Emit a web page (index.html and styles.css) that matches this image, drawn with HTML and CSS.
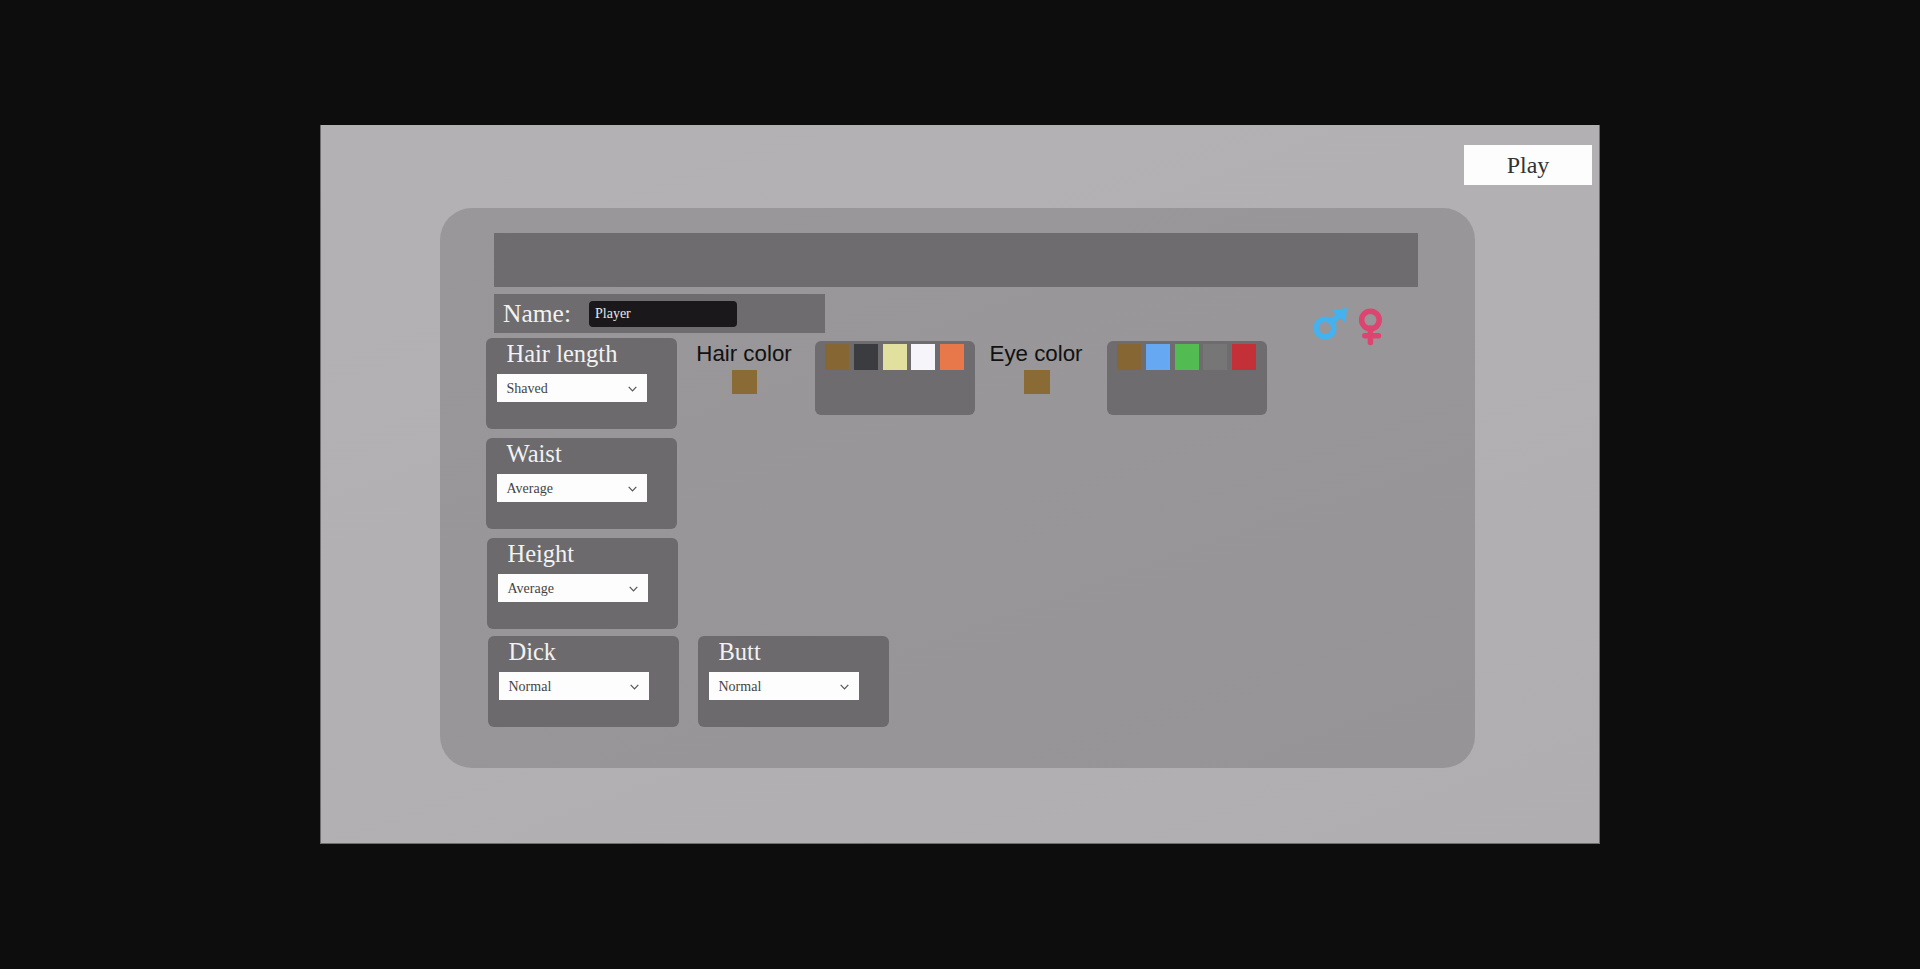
FILE: index.html
```html
<!DOCTYPE html>
<html lang="en">
<head>
<meta charset="utf-8">
<title>Character creation</title>
<link rel="stylesheet" href="styles.css">
</head>
<body>
<main class="stage">
  <button class="play" type="button">Play</button>
  <section class="panel">
    <div class="top-bar"></div>
    <div class="name-row">
      <div class="name-bar">
        <span class="name-label">Name:</span>
        <div class="name-input">Player</div>
      </div>
      <div class="genders">
        <svg class="male" width="34" height="32" viewBox="0 0 34 32" aria-label="Male">
          <circle cx="12" cy="20" r="8.800" fill="none" stroke="#43b2ef" stroke-width="5.500"/>
          <path d="M18 14 28 6" fill="none" stroke="#43b2ef" stroke-width="6"/>
          <path d="M34 0 19 2.500 32.500 15Z" fill="#43b2ef"/>
        </svg>
        <svg class="female" width="23" height="38" viewBox="0 0 23 38" aria-label="Female">
          <circle cx="11.400" cy="12" r="8.800" fill="none" stroke="#de4470" stroke-width="5.500"/>
          <path d="M11.400 20V34.500M5.800 27.700H19.500" fill="none" stroke="#de4470" stroke-width="5.500" stroke-linecap="round"/>
        </svg>
      </div>
    </div>

    <div class="row row-first">
      <div class="card">
        <div class="card-title">Hair length</div>
        <div class="select"><span>Shaved</span><svg width="9" height="6" viewBox="0 0 9 6"><path d="M.7.8 4.500 4.800 8.300.8" fill="none" stroke="#555" stroke-width="1.200"/></svg></div>
      </div>
      <div class="color-block hair-block">
        <div class="color-label">Hair color</div>
        <div class="color-current"></div>
      </div>
      <div class="palette hair-palette">
        <div class="swatch c-brown"></div>
        <div class="swatch c-dark"></div>
        <div class="swatch c-cream"></div>
        <div class="swatch c-white"></div>
        <div class="swatch c-orange"></div>
      </div>
      <div class="color-block eye-block">
        <div class="color-label">Eye color</div>
        <div class="color-current"></div>
      </div>
      <div class="palette eye-palette">
        <div class="swatch c-brown"></div>
        <div class="swatch c-blue"></div>
        <div class="swatch c-green"></div>
        <div class="swatch c-grey"></div>
        <div class="swatch c-red"></div>
      </div>
    </div>

    <div class="row row-waist">
      <div class="card">
        <div class="card-title">Waist</div>
        <div class="select"><span>Average</span><svg width="9" height="6" viewBox="0 0 9 6"><path d="M.7.8 4.500 4.800 8.300.8" fill="none" stroke="#555" stroke-width="1.200"/></svg></div>
      </div>
    </div>

    <div class="row row-height">
      <div class="card">
        <div class="card-title">Height</div>
        <div class="select"><span>Average</span><svg width="9" height="6" viewBox="0 0 9 6"><path d="M.7.8 4.500 4.800 8.300.8" fill="none" stroke="#555" stroke-width="1.200"/></svg></div>
      </div>
    </div>

    <div class="row row-last">
      <div class="card">
        <div class="card-title">Dick</div>
        <div class="select"><span>Normal</span><svg width="9" height="6" viewBox="0 0 9 6"><path d="M.7.8 4.500 4.800 8.300.8" fill="none" stroke="#555" stroke-width="1.200"/></svg></div>
      </div>
      <div class="card">
        <div class="card-title">Butt</div>
        <div class="select"><span>Normal</span><svg width="9" height="6" viewBox="0 0 9 6"><path d="M.7.8 4.500 4.800 8.300.8" fill="none" stroke="#555" stroke-width="1.200"/></svg></div>
      </div>
    </div>
  </section>
</main>
</body>
</html>
```

FILE: styles.css
```css
* { box-sizing: border-box; }

html, body { height: 100%; }

body {
  margin: 0;
  background: #0d0d0e;
  display: flex;
  justify-content: center;
  align-items: flex-start;
  padding-top: 125px;
  overflow: hidden;
  font-family: "Liberation Serif", "Times New Roman", serif;
}

.stage {
  width: 1280px;
  height: 719px;
  flex: none;
  display: flex;
  flex-direction: column;
  padding-top: 20px;
  border: solid #6f6d6f;
  border-width: 0 1px 1px;
  background: linear-gradient(160deg, #b3b1b3 0%, #b2b0b2 50%, #b0aeb0 100%);
}

.play {
  align-self: flex-end;
  width: 128px;
  height: 40px;
  margin-right: 7px;
  border: 0;
  padding: 0;
  background: #fdfdfd;
  color: #333;
  font: 24px "Liberation Serif", "Times New Roman", serif;
}

.panel {
  width: 1035px;
  height: 560px;
  margin: 23px 0 0 119px;
  padding: 25px 0 0 46px;
  border-radius: 32px;
  background: linear-gradient(160deg, #999799 0%, #989698 50%, #969496 100%);
}

.top-bar {
  width: 924px;
  height: 54px;
  margin: 0 0 7px 8px;
  background: #6e6c6e;
}

.name-row {
  width: 924px;
  height: 39px;
  margin-left: 8px;
  display: flex;
  align-items: flex-start;
}

.name-bar {
  width: 331px;
  height: 39px;
  padding-left: 9px;
  display: flex;
  align-items: center;
  background: #6e6c6e;
}

.name-label {
  flex: none;
  width: 86px;
  color: #f2f2f2;
  font-size: 25.500px;
}

.name-input {
  width: 148px;
  height: 26px;
  padding-left: 6px;
  border-radius: 4px;
  background: #1a181b;
  color: #e8e8e8;
  font-size: 14px;
  line-height: 26px;
}

.genders {
  margin: 14px 36px 0 auto;
  display: flex;
  gap: 12px;
  align-items: flex-start;
}

.row { display: flex; align-items: flex-start; }
.row-first { margin-top: 5px; }
.row-waist { margin: 9px 0 0 0; }
.row-height { margin: 9px 0 0 1px; }
.row-last { margin: 7px 0 0 2px; gap: 19px; }

.card {
  width: 191px;
  height: 91px;
  padding: 1px 0 0 11px;
  border-radius: 6px;
  background: #6c6a6c;
}

.card-title {
  margin-left: 9.500px;
  color: #f2f2f2;
  font-size: 24.500px;
  line-height: 30px;
}

.select {
  width: 150px;
  height: 28px;
  margin-top: 5px;
  padding: 1px 10px 0 9.500px;
  display: flex;
  align-items: center;
  justify-content: space-between;
  background: #fdfdfd;
  color: #444;
  font-size: 14px;
}

.color-block {
  flex: none;
  display: flex;
  flex-direction: column;
  align-items: center;
}

.hair-block { width: 96px; margin-left: 19px; }
.eye-block { width: 94px; margin-left: 14px; }

.color-label {
  color: #111;
  font: 22.300px/31px "Liberation Sans", Arial, sans-serif;
  white-space: nowrap;
}

.color-current {
  width: 25px;
  height: 24px;
  margin-top: 1px;
  background: #8a6a35;
}

.eye-block .color-current {
  width: 26px;
  margin-left: 2px;
}

.palette {
  width: 160px;
  height: 74px;
  margin-top: 3px;
  padding: 3px 10px 0;
  display: flex;
  gap: 4.750px;
  border-radius: 6px;
  background: #6e6c6e;
}

.hair-palette { margin-left: 23px; }
.eye-palette { margin-left: 24px; }

.swatch { width: 24px; height: 26px; flex: none; }

.c-brown { background: #866632; }
.c-dark { background: #3a3c40; }
.c-cream { background: #e2e09e; }
.c-white { background: #f6f5fa; }
.c-orange { background: #e8784a; }
.c-blue { background: #66a8f2; }
.c-green { background: #52bc52; }
.c-grey { background: #767676; }
.c-red { background: #c43038; }
```
